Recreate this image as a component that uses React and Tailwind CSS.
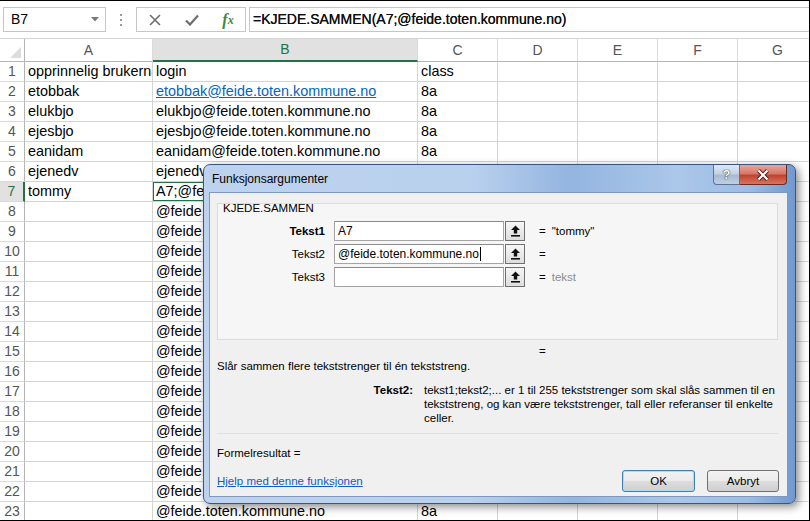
import React from 'react';

const colW = ['w-[128px]', 'w-[265px]', 'w-[80px]', 'w-[80px]', 'w-[80px]', 'w-[80px]', 'w-[80px]'];
const colNames = ['A', 'B', 'C', 'D', 'E', 'F', 'G'];

const rows = [
  ['opprinnelig brukernavn', 'login', 'class'],
  ['etobbak', 'etobbak@feide.toten.kommune.no', '8a'],
  ['elukbjo', 'elukbjo@feide.toten.kommune.no', '8a'],
  ['ejesbjo', 'ejesbjo@feide.toten.kommune.no', '8a'],
  ['eanidam', 'eanidam@feide.toten.kommune.no', '8a'],
  ['ejenedv', 'ejenedv@feide.toten.kommune.no', '8a'],
  ['tommy', 'A7;@feide.toten.kommune.no)', '8a'],
];
for (let i = 8; i <= 23; i++) rows.push(['', '@feide.toten.kommune.no', '8a']);

const FormulaBar = () => (
  <div className="h-[37px] flex items-start pt-[6px] pl-[3px]">
    {/* Name box */}
    <div className="w-[103px] h-[25px] border border-[#c6c6c6] flex items-center justify-between pl-[7px] pr-[6px] text-[14px]">
      <span>B7</span>
      <svg width="8" height="5" viewBox="0 0 8 5">
        <path d="M0 0H8L4 4.5Z" fill="#7a7a7a" />
      </svg>
    </div>
    <div className="w-[30px] h-[25px] flex flex-col items-center justify-center gap-[3px]">
      <div className="w-[2px] h-[2px] bg-[#9a9a9a]" />
      <div className="w-[2px] h-[2px] bg-[#9a9a9a]" />
      <div className="w-[2px] h-[2px] bg-[#9a9a9a]" />
    </div>
    {/* Cancel / enter / fx */}
    <div className="w-[110px] h-[25px] border border-[#c6c6c6] flex items-center">
      <div className="w-[36px] flex justify-center">
        <svg width="12" height="12" viewBox="0 0 12 12">
          <path d="M1 1L11 11M11 1L1 11" stroke="#6e6e6e" strokeWidth="1.6" />
        </svg>
      </div>
      <div className="w-[38px] flex justify-center">
        <svg width="14" height="12" viewBox="0 0 14 12">
          <path d="M1 6.5L5 10.5L13 1.5" stroke="#6e6e6e" strokeWidth="2.2" fill="none" />
        </svg>
      </div>
      <div className="w-[34px] flex justify-center font-['Liberation_Serif',serif] italic font-bold text-[16px] text-[#3d8a3d] leading-none">
        f<span className="text-[12px] relative top-[2px]">x</span>
      </div>
    </div>
    {/* Formula */}
    <div className="ml-[3px] flex-1 h-[25px] border border-r-0 border-[#c6c6c6] flex items-center pl-[3px] text-[14px] text-[#111] whitespace-nowrap [text-shadow:0_0_0.4px_#000]">
      =KJEDE.SAMMEN(A7;@feide.toten.kommune.no)
    </div>
  </div>
);

const Sheet = () => (
  <div className="text-[14px]">
    {/* Column headers */}
    <div className="flex h-[24px] border-t border-t-[#d4d4d4]">
      <div className="w-[25px] shrink-0 border-r border-r-[#b4b4b4] border-b border-b-[#b4b4b4] flex items-end justify-end pr-[3px] pb-[3px]">
        <svg width="11" height="11" viewBox="0 0 11 11">
          <path d="M11 0V11H0Z" fill="#dcdcdc" />
        </svg>
      </div>
      {colNames.map((c, i) => (
        <div
          key={c}
          className={`${colW[i]} shrink-0 flex items-center justify-center border-r border-r-[#dadada] ${
            c === 'B'
              ? 'bg-[#e1e1e1] text-[#217346] border-b-2 border-b-[#217346]'
              : 'text-[#555] border-b border-b-[#b4b4b4]'
          }`}
        >
          {c}
        </div>
      ))}
    </div>
    {/* Rows */}
    {rows.map((r, idx) => {
      const n = idx + 1;
      const sel = n === 7;
      return (
        <div key={n} className="flex h-[20px]">
          <div
            className={`w-[25px] shrink-0 flex items-center justify-center border-b border-b-[#dadada] ${
              sel
                ? 'bg-[#e1e1e1] text-[#217346] border-r-2 border-r-[#217346]'
                : 'text-[#555] border-r border-r-[#b4b4b4]'
            }`}
          >
            {n}
          </div>
          {colNames.map((c, i) => {
            const v = r[i] || '';
            const link = n === 2 && c === 'B';
            return (
              <div
                key={c}
                className={`${colW[i]} shrink-0 relative border-r border-b border-[#d4d4d4] px-[3px] flex items-center overflow-hidden whitespace-nowrap text-[14.4px]`}
              >
                <span className={link ? 'text-[#0563c1] underline' : ''}>{v}</span>
                {sel && c === 'B' && (
                  <div className="absolute -left-px -top-px -right-px -bottom-px border-2 border-[#217346]" />
                )}
              </div>
            );
          })}
        </div>
      );
    })}
  </div>
);

const RefButton = () => (
  <div className="ml-[1px] w-[20px] h-[20px] border border-[#707070] bg-[linear-gradient(180deg,#f6f6f6,#dedede)] flex items-center justify-center">
    <svg width="11" height="12" viewBox="0 0 11 12">
      <path d="M5.5 0.5L1 5H3.8V8.5H7.2V5H10Z" fill="#111" />
      <rect x="1" y="10" width="9" height="1.6" fill="#111" />
    </svg>
  </div>
);

const ArgRow = ({ label, value, result, muted, cursor, bold }) => (
  <div className="flex items-center h-[20px]">
    <div className={`w-[102px] text-right ${bold ? 'font-bold' : ''}`}>{label}</div>
    <div className="ml-[9px] w-[170px] h-[20px] bg-white border border-[#a5a5a5] border-t-[#8a8a8a] flex items-center pl-[3px] text-[12px]">
      {value}
      {cursor && <span className="w-px h-[14px] bg-black ml-px" />}
    </div>
    <RefButton />
    <div className="ml-[14px]">=</div>
    <div className={`ml-[6px] ${muted ? 'text-[#8c8c8c]' : ''}`}>{result}</div>
  </div>
);

const Dialog = () => (
  <div className="absolute left-[203px] top-[163px] w-[593px] h-[340px] rounded-[7px] border border-[#3a5680] bg-[linear-gradient(90deg,#bcd2ee_0%,#bad1ee_45%,#93b5e0_62%,#abc7e9_80%,#9dbde6_92%,#7199cf_100%)] shadow-[3px_3px_8px_rgba(0,0,0,0.45)] text-[11.5px] leading-[14px]">
    {/* Title bar */}
    <div className="relative h-[27px] flex items-center pl-[8px] text-[12px]">
      <span>Funksjonsargumenter</span>
      <div className="absolute top-0 right-[8px] flex">
        <div className="w-[27px] h-[20px] rounded-bl-[4px] border border-t-0 border-[#5d7391] bg-[linear-gradient(180deg,#dfe8f3_0%,#c3d2e4_45%,#a7bbd4_55%,#bfd0e4_100%)] flex items-center justify-center text-white font-bold text-[13px] [text-shadow:0_0_1px_#222,0_0_1px_#222]">
          ?
        </div>
        <div className="w-[47px] h-[20px] rounded-br-[4px] border border-t-0 border-l-0 border-[#6b2a22] bg-[linear-gradient(180deg,#eaa698_0%,#d7786a_45%,#c0432f_55%,#d8755f_100%)] flex items-center justify-center">
          <svg width="14" height="12" viewBox="0 0 14 12">
            <path d="M2.5 1.5L11.5 10.5M11.5 1.5L2.5 10.5" stroke="#4a1a14" strokeWidth="4" />
            <path d="M2.5 1.5L11.5 10.5M11.5 1.5L2.5 10.5" stroke="#fff" strokeWidth="2.2" />
          </svg>
        </div>
      </div>
    </div>

    {/* Client area */}
    <div className="ml-[5px] mr-[7px] h-[305px] bg-[#f0f0f0] border border-[#7f99bd]">
      <div className="ml-[7px] mt-[10px] w-[561px] h-[137px] bg-[#f6f6f6] border border-[#dcdcdc] pl-[5px]">
        <div className="leading-[12px] -mt-[2px]">KJEDE.SAMMEN</div>
        <div className="mt-[7px] flex flex-col gap-[3px]">
          <ArgRow label="Tekst1" value="A7" result={'"tommy"'} bold />
          <ArgRow label="Tekst2" value="@feide.toten.kommune.no" result="" cursor />
          <ArgRow label="Tekst3" value="" result="tekst" muted />
        </div>
      </div>

      <div className="mt-[4px] pl-[329px]">=</div>
      <div className="mt-[1px] pl-[7px]">Slår sammen flere tekststrenger til én tekststreng.</div>

      <div className="mt-[10px] flex">
        <div className="w-[203px] text-right font-bold">Tekst2:</div>
        <div className="ml-[11px] whitespace-nowrap">
          <div>tekst1;tekst2;... er 1 til 255 tekststrenger som skal slås sammen til en</div>
          <div>tekststreng, og kan være tekststrenger, tall eller referanser til enkelte</div>
          <div>celler.</div>
        </div>
      </div>

      <div className="mt-[8px] ml-[7px] w-[561px] h-px bg-[#dfdfdf]" />

      <div className="mt-[12px] pl-[7px]">Formelresultat =</div>

      <div className="mt-[10px] flex items-center justify-between pl-[7px] pr-[8px]">
        <span className="text-[#0b5fc4] underline">Hjelp med denne funksjonen</span>
        <div className="flex gap-[12px]">
          <div className="w-[73px] h-[22px] rounded-[3px] border border-[#3c7fb1] bg-[linear-gradient(180deg,#f2f2f2_0%,#ebebeb_50%,#dddddd_51%,#cfcfcf_100%)] shadow-[inset_0_0_0_1px_#a8dcf7] flex items-center justify-center">
            OK
          </div>
          <div className="w-[72px] h-[22px] rounded-[3px] border border-[#707070] bg-[linear-gradient(180deg,#f2f2f2_0%,#ebebeb_50%,#dddddd_51%,#cfcfcf_100%)] flex items-center justify-center">
            Avbryt
          </div>
        </div>
      </div>
    </div>
  </div>
);

export default function App() {
  return (
    <div className="relative w-[810px] h-[521px] overflow-hidden bg-white border-t border-r border-b border-black font-['Liberation_Sans',Arial,sans-serif] text-black">
      <FormulaBar />
      <Sheet />
      <Dialog />
    </div>
  );
}
